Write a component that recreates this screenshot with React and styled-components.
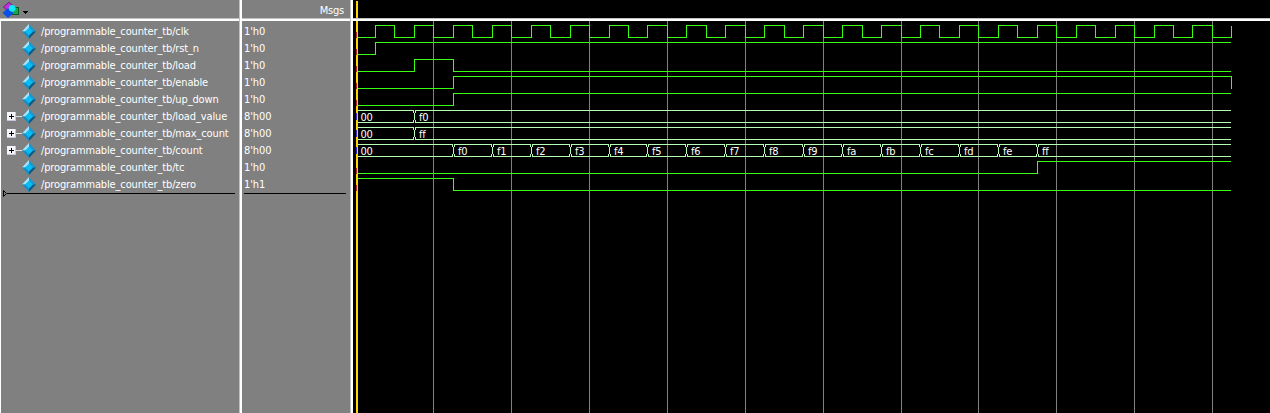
import React from "react";
import styled, { createGlobalStyle } from "styled-components";

const Global = createGlobalStyle`
  body { margin: 0; background: #000; overflow: hidden; }
  * { box-sizing: border-box; }
`;

const signals = [
  { name: "clk", value: "1'h0", edges: Array.from({ length: 45 }, (_, i) => i + 1) },
  { name: "rst_n", value: "1'h0", edges: [1] },
  { name: "load", value: "1'h0", edges: [3, 5] },
  { name: "enable", value: "1'h0", edges: [5, 45] },
  { name: "up_down", value: "1'h0", edges: [5] },
  { name: "load_value", value: "8'h00", bus: [[0, "00"], [3, "f0"]] },
  { name: "max_count", value: "8'h00", bus: [[0, "00"], [3, "ff"]] },
  {
    name: "count",
    value: "8'h00",
    bus: [[0, "00"], ...["f0", "f1", "f2", "f3", "f4", "f5", "f6", "f7", "f8", "f9", "fa", "fb", "fc", "fd", "fe", "ff"].map((v, i) => [5 + i * 2, v])],
  },
  { name: "tc", value: "1'h0", edges: [35] },
  { name: "zero", value: "1'h1", start: 1, edges: [5] },
];

const Window = styled.main`
  display: grid;
  grid-template-columns: 239px 111px 920px;
  width: 1270px;
  height: 413px;
  overflow: hidden;
  background: #808080;
  color: #fff;
  font: 11px/17px "DejaVu Sans Condensed", "Noto Sans", sans-serif;
`;

const Pane = styled.section`
  display: flex;
  flex-direction: column;
  min-width: 0;
  ${(p) => p.$divided && "border-left: 1px solid #c0c0c0; box-shadow: inset 2px 0 #fff;"}
  ${(p) => p.$dark && "background: #000;"}
`;

const Header = styled.header`
  display: flex;
  align-items: center;
  height: 21px;
  flex: none;
  border-bottom: 2px solid #fff;
  box-shadow: inset 0 -1px #c0c0c0;
  ${(p) => p.$divided && "margin-left: 2px;"}
  ${(p) => p.$right && "justify-content: flex-end; padding: 1px 6px 0 0; letter-spacing: -0.2px;"}
`;

const List = styled.div`
  flex: 1;
  padding-top: 2px;
  ${(p) => p.$edge && "border-left: 1px solid #fff;"}
`;

const Row = styled.div`
  display: flex;
  align-items: center;
  height: 17px;
  padding-left: ${(p) => (p.$value ? 4 : 5)}px;
  white-space: pre;
`;

const Label = styled.span`
  margin-left: 5px;
  letter-spacing: -0.14px;
`;

const Value = styled.span`
  letter-spacing: -0.1px;
`;

const Icon = styled.svg`
  display: block;
  flex: none;
`;

const InsertBar = styled.div`
  display: flex;
  align-items: center;
  height: 7px;
  margin-top: -3px;
  padding-left: ${(p) => (p.$value ? 4 : 2)}px;
`;

const Rule = styled.div`
  height: 1px;
  flex: 1;
  margin-right: 4px;
  background: #000;
`;

const Expander = () => (
  <Icon width="16" height="17" viewBox="0 0 16 17" shapeRendering="crispEdges">
    <rect x="1" y="4" width="9" height="9" fill="#f4f5f9" />
    <path d="M1 12.5h9M9.5 4v9" stroke="#c3c9d8" />
    <path d="M3 8.5h5M5.5 6v5" stroke="#000" />
    <path d="M10 8.5h6" stroke="#ddd" />
  </Icon>
);

const Spacer = styled.span`
  width: 16px;
  flex: none;
`;

const Gem = () => (
  <Icon width="14" height="15" viewBox="0 0 14 15">
    <path d="M7 0 0 7.5 4 7.5 7 4Z" fill="#a8e4f8" />
    <path d="M7 0 14 7.5H10L7 4Z" fill="#1898d0" />
    <path d="M0 7.5 7 15V11L4 7.5Z" fill="#128fc9" />
    <path d="M14 7.5 7 15V11L10 7.5Z" fill="#075c86" />
    <path d="M7 3.5 11 7.5 7 11.5 3 7.5Z" fill="#08bdf4" />
  </Icon>
);

const Logo = () => (
  <Icon width="32" height="19" viewBox="0 0 32 19">
    <path d="M9 2.2 13.6 6.2 8 11 3.4 7Z" fill="#c32ee0" stroke="#611074" strokeWidth="0.8" />
    <rect x="11.5" y="7.5" width="7" height="7" fill="#20a64a" stroke="#085b25" />
    <path d="M8 8 13.6 13 8 18 2.6 13Z" fill="#0a4fe8" />
    <circle cx="12.2" cy="8.3" r="3.4" fill="#12e8f4" />
    <path d="M23 11h5v1h-1v1h-1v1h-1v-1h-1v-1h-1Z" fill="#000" />
  </Icon>
);

const WaveArea = styled.svg`
  display: block;
  text {
    font: 11px "DejaVu Sans Condensed", "Noto Sans", sans-serif;
    letter-spacing: -0.3px;
    fill: #fff;
  }
`;

const at = (k) => Math.floor(356 + 19.465 * k) - 353;
const END = at(45);

function Trace({ signal, top }) {
  let level = signal.start || 0;
  const y = () => top + (level ? 0.5 : 12.5);
  let d = `M5 ${y()}`;
  signal.edges.forEach((k) => {
    d += `H${at(k) + 0.5}`;
    level = 1 - level;
    d += `V${y()}`;
  });
  if (signal.edges[signal.edges.length - 1] !== 45) d += `H${END}`;
  return <path d={d} fill="none" stroke="#38ff14" />;
}

function Bus({ signal, top }) {
  return signal.bus.map(([k, text], i) => {
    const x = at(k);
    const start = k ? x + 1 : 5;
    const next = signal.bus[i + 1];
    const end = next ? at(next[0]) : END;
    return (
      <g key={k}>
        <path d={`M${start} ${top + 0.5}H${end}M${start} ${top + 12.5}H${end}`} stroke="#b4ffb4" />
        {k > 0 && (
          <path
            d={`M${x - 0.5} ${top + 1}v2M${x + 1.5} ${top + 1}v2M${x + 0.5} ${top + 3}v7M${x - 0.5} ${top + 10}v2M${x + 1.5} ${top + 10}v2`}
            stroke="#b4ffb4"
          />
        )}
        <text x={k ? x + 5 : 7.5} y={top + 11}>{text}</text>
      </g>
    );
  });
}

function Waves() {
  return (
    <WaveArea width="917" height="392" viewBox="0 21 917 392" shapeRendering="crispEdges">
      {Array.from({ length: 11 }, (_, i) => (
        <path key={i} d={`M${at(4 + i * 4) + 0.5} 21V413`} stroke="#808080" />
      ))}
      <rect x="3" y="21" width="2" height="392" fill="#ffd400" />
      {signals.map((s, i) => {
        const top = 25 + i * 17;
        return (
          <g key={s.name}>
            <path d={`M3.5 ${top + (s.bus ? 3 : 7)}v${s.bus ? 7 : 6}`} stroke={s.bus ? "#3c28c8" : "#c02818"} />
            {s.bus ? <Bus signal={s} top={top} /> : <Trace signal={s} top={top} />}
          </g>
        );
      })}
    </WaveArea>
  );
}

const CursorStub = styled.div`
  width: 2px;
  height: 17px;
  margin-left: 3px;
  background: #ffd400;
`;

const WaveBody = styled.div`
  padding-left: 2px;
`;

export default function App() {
  return (
    <>
      <Global />
      <Window>
        <Pane>
          <Header><Logo /></Header>
          <List $edge>
            {signals.map((s) => (
              <Row key={s.name}>
                {s.bus ? <Expander /> : <Spacer />}
                <Gem />
                <Label>{`/programmable_counter_tb/${s.name}`}</Label>
              </Row>
            ))}
            <InsertBar>
              <Icon width="4" height="7" viewBox="0 0 4 7"><path d="M.5.5v6l3-3Z" fill="none" stroke="#000" /></Icon>
              <Rule />
            </InsertBar>
          </List>
        </Pane>
        <Pane $divided>
          <Header $divided $right>Msgs</Header>
          <List>
            {signals.map((s) => <Row key={s.name} $value><Value>{s.value}</Value></Row>)}
            <InsertBar $value><Rule /></InsertBar>
          </List>
        </Pane>
        <Pane $divided $dark>
          <Header $divided><CursorStub /></Header>
          <WaveBody><Waves /></WaveBody>
        </Pane>
      </Window>
    </>
  );
}
